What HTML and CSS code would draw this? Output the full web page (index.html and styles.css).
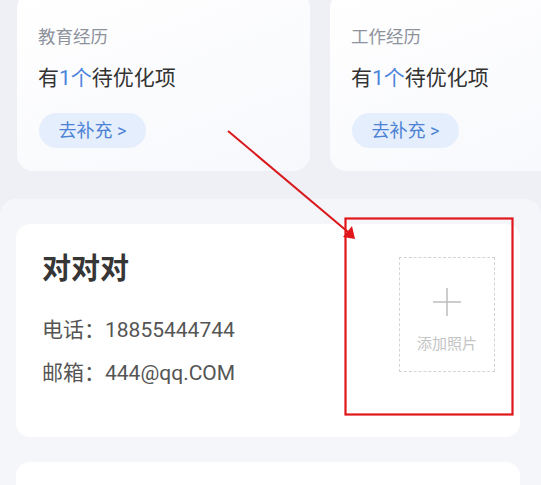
FILE: index.html
```html
<!DOCTYPE html>
<html lang="zh">
<head>
<meta charset="utf-8">
<link rel="stylesheet" href="styles.css">
</head>
<body>
<div class="page">
  <div class="top-row">
    <div class="tip-card">
      <div class="tip-title">教育经历</div>
      <div class="tip-main">有<span class="hl">1个</span>待优化项</div>
      <div class="tip-btn">去补充 &gt;</div>
    </div>
    <div class="tip-card">
      <div class="tip-title">工作经历</div>
      <div class="tip-main">有<span class="hl">1个</span>待优化项</div>
      <div class="tip-btn">去补充 &gt;</div>
    </div>
  </div>
  <div class="panel">
    <div class="info-card">
      <div class="info-left">
        <div class="name">对对对</div>
        <div class="line">电话：18855444744</div>
        <div class="line">邮箱：444@qq.COM</div>
      </div>
      <div class="photo">
        <svg class="plus" width="30" height="30" viewBox="0 0 30 30"><path d="M15 1V29M1 15H29" stroke="#bdbdbd" stroke-width="1.5" fill="none"/></svg>
        <div class="photo-text">添加照片</div>
      </div>
    </div>
    <div class="info-card next"></div>
  </div>
  <svg class="annot" width="541" height="485" viewBox="0 0 541 485">
    <line x1="228" y1="131" x2="348" y2="232" stroke="#d9181c" stroke-width="2"/>
    <polygon points="355,239 352,226 343,237" fill="#e0161a"/>
    <rect x="345.5" y="218.5" width="167" height="196" fill="none" stroke="#e0161a" stroke-width="2.2"/>
  </svg>
</div>
</body>
</html>
```
FILE: styles.css
```css
html, body {
  margin: 0;
  padding: 0;
}
body {
  background: #eef0f6;
  font-family: Roboto, "Noto Sans CJK SC", sans-serif;
  width: 541px;
  height: 485px;
  overflow: hidden;
}
.page {
  position: relative;
  width: 541px;
  height: 485px;
  overflow: hidden;
}
.top-row {
  display: flex;
  gap: 20px;
  padding-left: 17px;
  margin-top: -8px;
}
.tip-card {
  flex: 0 0 293px;
  height: 179px;
  box-sizing: border-box;
  padding: 33px 0 0 21px;
  border-radius: 16px;
  background: linear-gradient(160deg, #ffffff 0%, #f7f8fc 100%);
  display: flex;
  flex-direction: column;
  align-items: flex-start;
}
.tip-title {
  font-size: 17.5px;
  line-height: 24px;
  color: #8d929c;
}
.tip-main {
  margin-top: 14px;
  font-size: 21px;
  line-height: 30px;
  color: #333;
}
.hl {
  color: #4a84dc;
}
.tip-btn {
  margin-top: 20px;
  margin-left: 1px;
  height: 35px;
  width: 107px;
  box-sizing: border-box;
  border-radius: 18px;
  background: #e5eefc;
  color: #4b82d4;
  font-size: 18px;
  line-height: 35px;
  text-align: center;
}
.panel {
  margin-top: 28px;
  background: #f5f6fa;
  border-radius: 16px 16px 0 0;
  padding: 25px 21px 0 16px;
  height: 300px;
}
.info-card {
  background: #fff;
  border-radius: 14px;
  height: 213px;
  display: flex;
}
.info-card.next {
  margin-top: 25px;
}
.info-left {
  padding: 25px 0 0 26px;
}
.name {
  font-size: 29px;
  font-weight: 600;
  line-height: 40px;
  color: #363636;
}
.line {
  font-size: 21px;
  line-height: 30px;
  color: #555;
}
.name + .line {
  margin-top: 26px;
}
.line + .line {
  margin-top: 13px;
}
.photo {
  margin: 33px 25px 0 auto;
  width: 96px;
  height: 115px;
  box-sizing: border-box;
  border: 1px dashed #d4d4d4;
  display: flex;
  flex-direction: column;
  align-items: center;
}
.plus {
  margin-top: 29px;
}
.photo-text {
  margin-top: 17px;
  font-size: 15px;
  line-height: 20px;
  color: #c4c4c4;
}
.annot {
  position: absolute;
  left: 0;
  top: 0;
  pointer-events: none;
}
```
